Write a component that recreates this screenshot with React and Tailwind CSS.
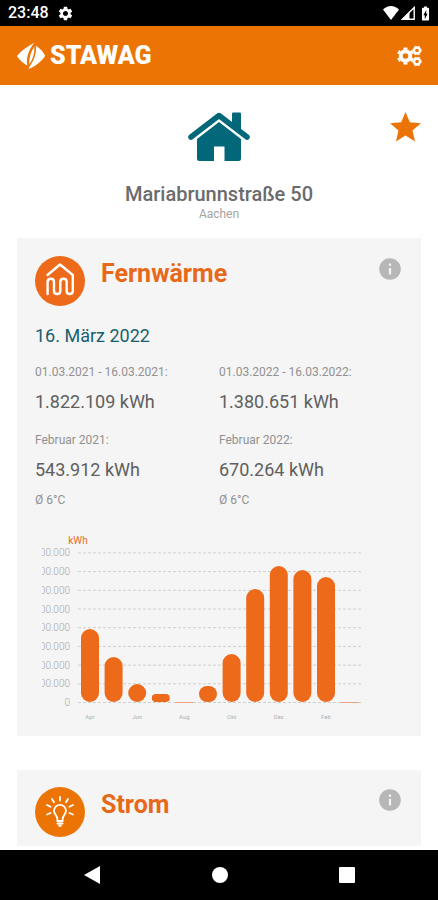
import React, { useState } from "react";
import { MdBatteryChargingFull, MdInfo, MdSettings, MdStar } from "react-icons/md";

const readings = [
  { label: "01.03.2021 - 16.03.2021:", value: "1.822.109 kWh", month: "Februar 2021:", monthValue: "543.912 kWh", temp: "Ø 6°C" },
  { label: "01.03.2022 - 16.03.2022:", value: "1.380.651 kWh", month: "Februar 2022:", monthValue: "670.264 kWh", temp: "Ø 6°C" },
];

const months = [
  { label: "Apr", height: 73 },
  { label: "", height: 45 },
  { label: "Jun", height: 18 },
  { label: "", height: 8 },
  { label: "Aug", height: 0 },
  { label: "", height: 16 },
  { label: "Okt", height: 48 },
  { label: "", height: 113 },
  { label: "Dez", height: 136 },
  { label: "", height: 132 },
  { label: "Feb", height: 125 },
  { label: "", height: 0 },
];

const BASELINE = 172;
const STEP = 18.7;

const StatusBar = () => (
  <div className="flex h-[26px] shrink-0 items-center justify-between bg-black pr-1 pl-2 text-white">
    <div className="flex items-center gap-2">
      <span className="text-base leading-5 font-medium">23:48</span>
      <MdSettings size={17} />
    </div>
    <div className="flex items-center gap-0.5">
      <svg width="16" height="14" viewBox="0 0 16 14" fill="currentColor" aria-hidden="true">
        <path d="M0 3.6Q3.5 0 8 0T16 3.6L8 14Z" />
      </svg>
      <svg width="14" height="14" viewBox="0 0 14 14" fill="none" aria-hidden="true">
        <path d="M1.5 13.2H13.2V1.5Z" stroke="currentColor" strokeWidth="1.4" />
        <path d="M0.5 13.5H8.5V5.5Z" fill="currentColor" />
      </svg>
      <MdBatteryChargingFull size={17} />
    </div>
  </div>
);

const GearsIcon = () => (
  <svg width="25" height="22" viewBox="0 0 25 22" fill="none" stroke="white" aria-hidden="true">
    <circle cx="8.5" cy="11" r="4.800" strokeWidth="4" />
    <circle cx="8.5" cy="11" r="7.500" strokeWidth="2.200" pathLength="12" strokeDasharray="1 1" strokeDashoffset="0.5" transform="rotate(30 8.5 11)" />
    <circle cx="20" cy="5.5" r="3" strokeWidth="2.4" />
    <circle cx="20" cy="5.5" r="4.400" strokeWidth="1" pathLength="12" strokeDasharray="1 1" strokeDashoffset="0.5" />
    <circle cx="20" cy="16.5" r="3" strokeWidth="2.4" />
    <circle cx="20" cy="16.5" r="4.400" strokeWidth="1" pathLength="12" strokeDasharray="1 1" strokeDashoffset="0.5" />
  </svg>
);

const Header = () => (
  <header className="flex h-[59px] shrink-0 items-center justify-between bg-[#ec7404] px-4 text-white">
    <a href="#" className="flex items-center gap-1">
      <svg width="30" height="28" viewBox="0 0 30 28" fill="currentColor" aria-hidden="true">
        <path d="M18.3 0.7C12 4 5.5 8.5 1 14C3.5 18 7.5 21.5 11.3 23.5C10 15.5 12.5 8 18.3 0.7Z" />
        <path d="M20 3.8C24 6.5 27.5 10 29.2 13.7C25.5 19.5 19.5 24.3 12.3 27C13 26 13.3 25.3 13.6 24.5C18.5 18 20.5 11 20 3.8Z" />
        <path d="M18.3 4.5C14.5 10.5 12.9 16.5 13.3 22.5C17 17 18.8 11 18.3 4.5Z" />
      </svg>
      <span className="text-[25px] leading-7 font-black">STAWAG</span>
    </a>
    <button aria-label="Einstellungen">
      <GearsIcon />
    </button>
  </header>
);

const HouseIcon = () => (
  <svg width="62" height="50" viewBox="0 0 62 50" fill="#03677a" aria-hidden="true">
    <path d="M44 1.5Q44 0.5 45 0.5H52Q53 0.5 53 1.5V19L44 12Z" />
    <path d="M3 25L31 3.5L59 25" fill="none" stroke="#03677a" strokeWidth="5.5" strokeLinecap="round" strokeLinejoin="round" />
    <path d="M31 10L53 27V46.5Q53 49 50.5 49H36.5V34.5H26V49H11.5Q9 49 9 46.5V27Z" />
  </svg>
);

const HeatIcon = () => (
  <svg width="50" height="50" viewBox="0 0 50 50" fill="none" stroke="white" strokeWidth="2.4" strokeLinecap="round" strokeLinejoin="round" aria-hidden="true">
    <circle cx="25" cy="25" r="25" fill="#ec6a1a" stroke="none" />
    <path d="M12.5 19L25 8.5L37.8 19V35Q37.8 38 34.8 38Q31.7 38 31.7 35V26Q31.7 22.8 28.5 22.8Q25.3 22.8 25.3 26V35Q25.3 38 22.2 38Q19 38 19 35V26Q19 22.8 15.8 22.8Q12.6 22.8 12.6 26V38" />
  </svg>
);

const BulbIcon = () => (
  <svg width="50" height="50" viewBox="0 0 50 50" fill="none" stroke="white" strokeWidth="1.8" strokeLinecap="round" strokeLinejoin="round" aria-hidden="true">
    <circle cx="25" cy="25" r="25" fill="#ec7404" stroke="none" />
    <path d="M22.3 34V31.5C22.3 28.5 19 27.5 19 23.8A6 6 0 0 1 31 23.8C31 27.5 27.7 28.5 27.7 31.5V34Z" />
    <path d="M22.5 36.5H27.5M24.2 38.8H25.8" strokeWidth="2" />
    <path d="M25 10V13.5M17 12L19 15.3M33 12L31 15.3M12 18L15.5 19.8M38 18L34.5 19.8M12 27.5L15.5 26M38 27.5L34.5 26" />
  </svg>
);

const CardHeader = ({ icon, title }) => (
  <div className="flex items-start gap-4">
    {icon}
    <h2 className="mt-1 flex-1 text-[25px] leading-7 font-bold text-[#e8681a]">{title}</h2>
    <button aria-label={`Info ${title}`} className="text-[#b7b7b7]">
      <MdInfo size={26} />
    </button>
  </div>
);

const ConsumptionChart = () => (
  <svg viewBox="0 0 368 190" className="mt-[22px] w-full" role="img" aria-label="kWh">
    <text x="43" y="14" textAnchor="middle" fontSize="10" fill="#ec6a1a">kWh</text>
    {/* Grid lines */}
    {Array.from({ length: 9 }, (_, i) => (
      <line key={i} x1="43" x2="327" y1={BASELINE + 0.5 - i * STEP} y2={BASELINE + 0.5 - i * STEP} stroke="#cfcfcf" strokeDasharray="3 2" />
    ))}
    {/* Value axis, cut off on its left side */}
    <svg x="7" y="0" width="32" height="190">
      {Array.from({ length: 9 }, (_, i) => (
        <text key={i} x="28" y={BASELINE + 4 - i * STEP} textAnchor="end" fontSize="10" fontWeight="300" fill="#a8a8a8">
          {i === 0 ? "0" : "00.000"}
        </text>
      ))}
    </svg>
    {months.map((month, i) => {
      const x = 55 + i * 23.6;
      return (
        <g key={i}>
          {month.height > 0 ? (
            <rect x={x - 9} y={BASELINE - month.height} width="18" height={month.height} rx={Math.min(9, month.height / 2)} fill="#ec6a1a" />
          ) : (
            <rect x={x - 9} y={BASELINE} width="18" height="1" fill="#eda07c" />
          )}
          <text x={x} y="189" textAnchor="middle" fontSize="6" fill="#b0b0b0">{month.label}</text>
        </g>
      );
    })}
  </svg>
);

const NavigationBar = () => (
  <nav className="flex h-[50px] shrink-0 items-center justify-around bg-black px-7 text-white">
    <button aria-label="Zurück">
      <svg width="18" height="20" viewBox="0 0 18 20" fill="currentColor"><path d="M17 1V19L1 10Z" /></svg>
    </button>
    <button aria-label="Startbildschirm" className="size-4 rounded-full bg-white" />
    <button aria-label="Übersicht" className="size-4 rounded-[1px] bg-white" />
  </nav>
);

export default function App() {
  const [favorite, setFavorite] = useState(true);

  return (
    <div className="flex h-screen flex-col bg-white font-['Roboto',sans-serif]">
      <StatusBar />
      <Header />
      <main className="min-h-0 flex-1 overflow-y-auto px-[17px]">
        <section className="relative flex flex-col items-center pt-[27px]">
          <HouseIcon />
          <h1 className="mt-5 text-xl leading-6 font-medium text-[#6b6b6b]">Mariabrunnstraße 50</h1>
          <p className="text-xs leading-4 text-[#a3a3a3]">Aachen</p>
          <button
            aria-label="Favorit"
            aria-pressed={favorite}
            onClick={() => setFavorite(!favorite)}
            className="absolute top-6 -right-[3px] text-[#ec7404]"
          >
            <MdStar size={37} />
          </button>
        </section>

        {/* District heating */}
        <section className="mt-4 bg-[#f5f5f5] px-[18px] pt-[18px] pb-4">
          <CardHeader icon={<HeatIcon />} title="Fernwärme" />
          <p className="mt-[18px] text-lg leading-6 text-[#17606f]">16. März 2022</p>
          <div className="mt-4 grid grid-cols-2">
            {readings.map((reading) => (
              <div key={reading.label} className="text-[#5f5f5f]">
                <p className="text-xs leading-4 text-[#919191]">{reading.label}</p>
                <p className="mt-[10px] text-lg leading-6">{reading.value}</p>
                <p className="mt-[18px] text-xs leading-4 text-[#919191]">{reading.month}</p>
                <p className="mt-[10px] text-lg leading-6">{reading.monthValue}</p>
                <p className="mt-[10px] text-xs leading-4 text-[#919191]">{reading.temp}</p>
              </div>
            ))}
          </div>
          <ConsumptionChart />
        </section>

        {/* Electricity */}
        <section className="mt-[34px] bg-[#f5f5f5] px-[18px] pt-[17px] pb-[9px]">
          <CardHeader icon={<BulbIcon />} title="Strom" />
        </section>
      </main>
      <NavigationBar />
    </div>
  );
}
